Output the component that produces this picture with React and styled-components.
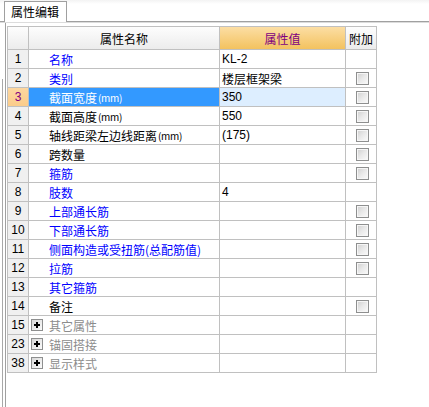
import React from "react";
import styled, { createGlobalStyle, css } from "styled-components";

const GlobalStyle = createGlobalStyle`
  html, body { margin: 0; padding: 0; background: #ffffff; }
  body {
    font-family: "Noto Sans CJK SC", "Liberation Sans", sans-serif;
    font-size: 12px;
    color: #000;
  }
  * { box-sizing: border-box; }
`;

const Page = styled.div`
  width: 429px;
  height: 407px;
  display: flex;
  flex-direction: column;
  overflow: hidden;
  background: #fff;
`;

const TabBar = styled.div`
  height: 22px;
  display: flex;
  align-items: flex-end;
  padding-left: 4px;
  border-bottom: 1px solid #a0a0a0;
  background: linear-gradient(#f3f3f3 0, #ffffff 4px, #ffffff 100%);
`;

const Tab = styled.div`
  position: relative;
  z-index: 1;
  width: 63px;
  height: 21px;
  margin-bottom: -1px;
  border: 1px solid #a0a0a0;
  border-bottom: none;
  background: #fff;
  padding-left: 6px;
  font-size: 12px;
  line-height: 19px;
  color: #000;
`;

const Frame = styled.div`
  position: relative;
  flex: 1;
  display: flex;
  padding-left: 5px;
  border-top: 1px solid #dcdcdc;
  &::before {
    content: "";
    position: absolute;
    left: 2px;
    top: 56px;
    bottom: 0;
    border-left: 1px solid #a8a8a8;
  }
`;

const Panel = styled.div`
  flex: 1;
  border-left: 1px solid #a0a0a0;
  padding: 3px 0 0 1px;
`;

const Grid = styled.div`
  width: 370px;
  border-left: 1px solid #c0c0c0;
  border-top: 1px solid #c0c0c0;
`;

const Row = styled.div`
  display: flex;
  height: ${(p) => (p.$header ? 23 : 19)}px;
  border-bottom: 1px solid #c0c0c0;
`;

const widths = { num: 21, name: 191, value: 126, attach: 31 };

const Cell = styled.div`
  flex: none;
  width: ${(p) => widths[p.$col]}px;
  border-right: 1px solid #c0c0c0;
  display: flex;
  align-items: center;
  white-space: nowrap;
  overflow: hidden;
`;

const HeadCell = styled(Cell)`
  justify-content: center;
  font-size: 12px;
  background: ${(p) =>
    p.$accent
      ? "linear-gradient(#fcdea4, #f3c25f)"
      : "linear-gradient(#fdfdfd, #ececec)"};
  color: ${(p) => (p.$accent ? "#800080" : "#000")};
`;

const NumCell = styled(Cell)`
  justify-content: center;
  font-family: "Liberation Sans", "DejaVu Sans", sans-serif;
  font-size: 12px;
  background: ${(p) =>
    p.$selected ? "linear-gradient(#fdd7a0, #fbcc8a)" : "#f0f0f0"};
  color: ${(p) => (p.$selected ? "#800080" : "#000")};
`;

const colors = { blue: "#0000ff", black: "#000000", gray: "#8c8c8c" };

const NameCell = styled(Cell)`
  padding-left: ${(p) => (p.$group ? 2 : 20)}px;
  color: ${(p) => (p.$selected ? "#ffffff" : colors[p.$tone])};
  background: ${(p) => (p.$selected ? "#3399ff" : "#fff")};
  font-size: 12px;
`;

const Unit = styled.span`
  font-size: 10px;
  letter-spacing: -0.3px;
  margin-left: 1px;
`;

const ValueCell = styled(Cell)`
  padding-left: 2px;
  font-family: "Liberation Sans", "Noto Sans CJK SC", sans-serif;
  font-size: 12px;
  ${(p) =>
    p.$cjk &&
    css`
      font-family: "Noto Sans CJK SC", sans-serif;
    `}
  background: ${(p) => (p.$selected ? "#ddeeff" : "#fff")};
`;

const AttachCell = styled(Cell)`
  justify-content: center;
  padding-left: 2px;
  background: #fff;
`;

const CheckBox = styled.span`
  display: block;
  width: 13px;
  height: 13px;
  border: 1px solid #8e8f8f;
  box-shadow: inset 0 0 0 1px #f6f6f6;
  background: linear-gradient(135deg, #cfcfcf 0%, #e9e9e9 50%, #fbfbfb 100%);
`;

const Expander = styled.span`
  position: relative;
  flex: none;
  width: 12px;
  height: 12px;
  margin-right: 6px;
  border: 1px solid #8e8f8f;
  background: linear-gradient(135deg, #d9d9d9, #fbfbfb);
  &::before,
  &::after {
    content: "";
    position: absolute;
    background: #000;
  }
  &::before {
    left: 2px;
    top: 4px;
    width: 6px;
    height: 2px;
  }
  &::after {
    left: 4px;
    top: 2px;
    width: 2px;
    height: 6px;
  }
`;

const rows = [
  { n: 1, name: "名称", tone: "blue", value: "KL-2", cb: false },
  { n: 2, name: "类别", tone: "blue", value: "楼层框架梁", cjk: true, cb: true },
  { n: 3, name: "截面宽度", unit: true, tone: "black", value: "350", cb: true, selected: true },
  { n: 4, name: "截面高度", unit: true, tone: "black", value: "550", cb: true },
  { n: 5, name: "轴线距梁左边线距离", unit: true, tone: "black", value: "(175)", cb: true },
  { n: 6, name: "跨数量", tone: "black", value: "", cb: true },
  { n: 7, name: "箍筋", tone: "blue", value: "", cb: true },
  { n: 8, name: "肢数", tone: "blue", value: "4", cb: false },
  { n: 9, name: "上部通长筋", tone: "blue", value: "", cb: true },
  { n: 10, name: "下部通长筋", tone: "blue", value: "", cb: true },
  { n: 11, name: "侧面构造或受扭筋(总配筋值)", tone: "blue", value: "", cb: true },
  { n: 12, name: "拉筋", tone: "blue", value: "", cb: true },
  { n: 13, name: "其它箍筋", tone: "blue", value: "", cb: false },
  { n: 14, name: "备注", tone: "black", value: "", cb: true },
  { n: 15, name: "其它属性", tone: "gray", group: true },
  { n: 23, name: "锚固搭接", tone: "gray", group: true },
  { n: 38, name: "显示样式", tone: "gray", group: true },
];

export default function App() {
  return (
    <>
      <GlobalStyle />
      <Page>
        <TabBar>
          <Tab>属性编辑</Tab>
        </TabBar>
        <Frame>
          <Panel>
            <Grid>
              <Row $header>
                <HeadCell $col="num" />
                <HeadCell $col="name">属性名称</HeadCell>
                <HeadCell $col="value" $accent>
                  属性值
                </HeadCell>
                <HeadCell $col="attach">附加</HeadCell>
              </Row>
              {rows.map((r) => (
                <Row key={r.n}>
                  <NumCell $col="num" $selected={r.selected}>
                    {r.n}
                  </NumCell>
                  <NameCell
                    $col="name"
                    $tone={r.tone}
                    $group={r.group}
                    $selected={r.selected}
                  >
                    {r.group && <Expander />}
                    {r.name}
                    {r.unit && <Unit>(mm)</Unit>}
                  </NameCell>
                  <ValueCell $col="value" $cjk={r.cjk} $selected={r.selected}>
                    {r.value}
                  </ValueCell>
                  <AttachCell $col="attach">{r.cb && <CheckBox />}</AttachCell>
                </Row>
              ))}
            </Grid>
          </Panel>
        </Frame>
      </Page>
    </>
  );
}
